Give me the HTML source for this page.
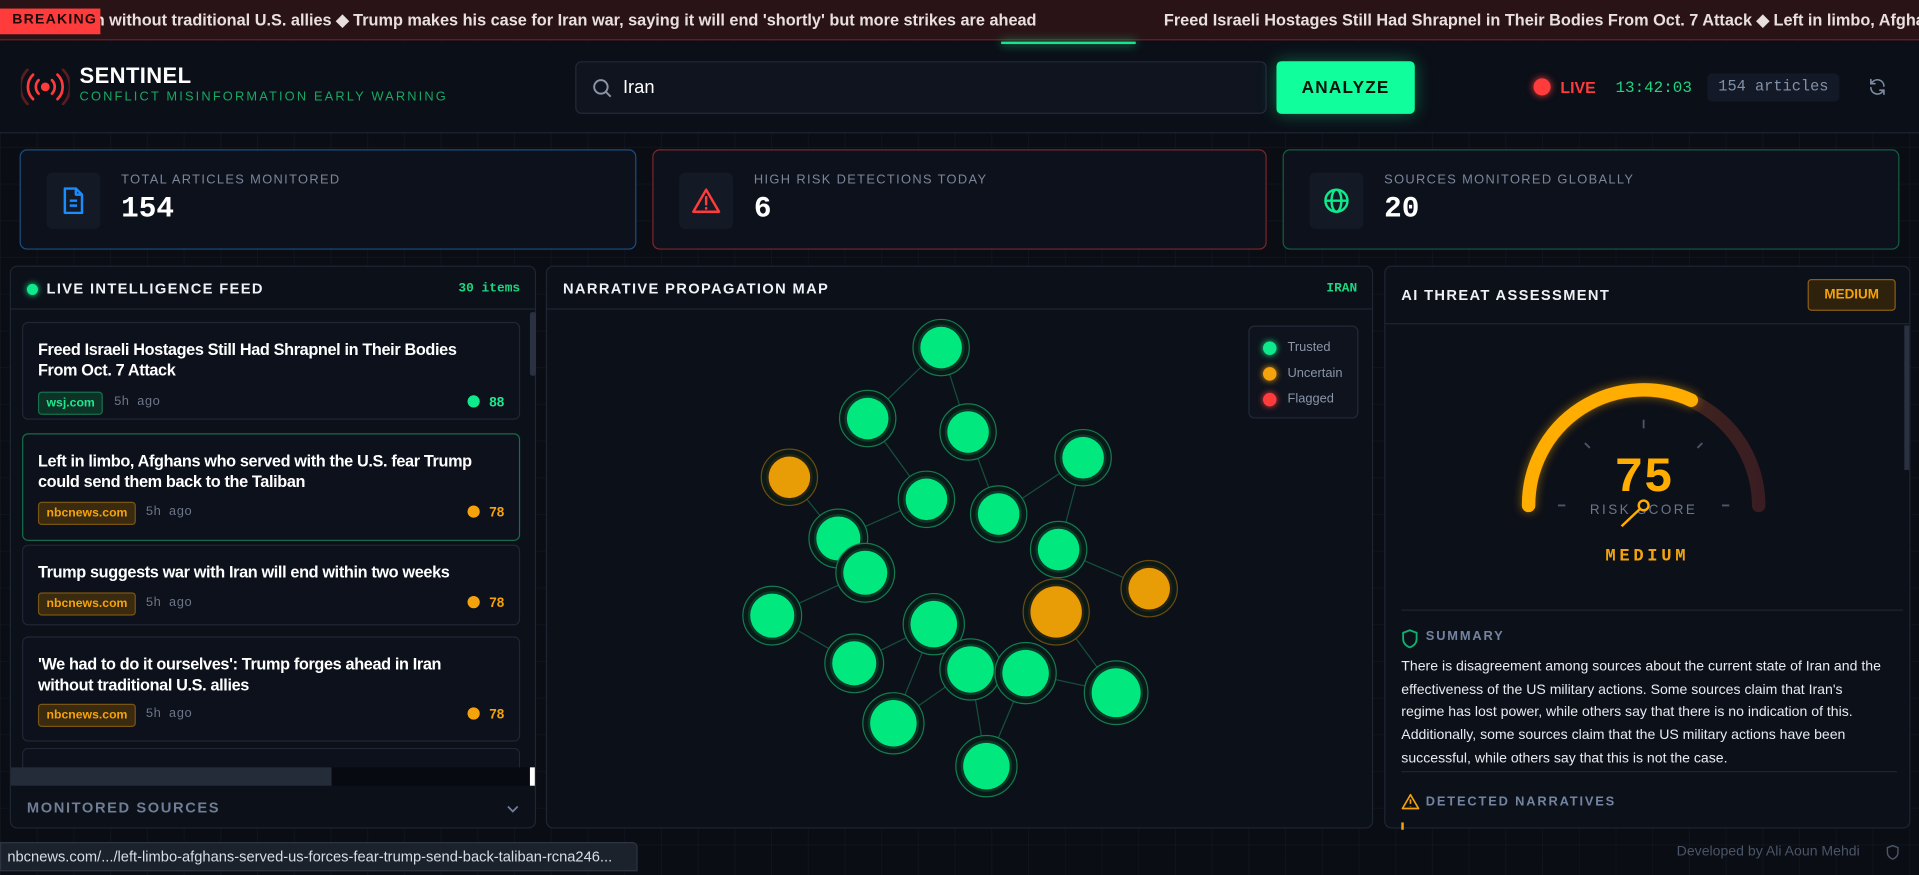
<!DOCTYPE html>
<html><head><meta charset="utf-8">
<style>
*{box-sizing:border-box;margin:0;padding:0}
html,body{width:1919px;height:875px;overflow:hidden;background:#0a0d14}
#w{width:1568px;height:715px;transform:scale(1.22385);transform-origin:0 0;position:relative;font-family:"Liberation Sans",sans-serif;color:#e6e9ef;
background-color:#0a0d14;background-image:linear-gradient(rgba(40,50,70,.18) 1px,transparent 1px),linear-gradient(90deg,rgba(40,50,70,.18) 1px,transparent 1px);background-size:30px 30px}
.mono{font-family:"Liberation Mono",monospace}
.abs{position:absolute}
#tick{left:0;top:0;width:1568px;height:33px;background:#2a1317;border-bottom:1px solid #6b2226;overflow:hidden;white-space:nowrap}
#tick .t{position:absolute;top:9px;font-size:13.3px;font-weight:bold;color:#e8dfe0}
#brk{left:0;top:7px;width:82px;height:21px;background:#ff3b3b;color:#1a0a0a;font-size:11.5px;font-weight:bold;letter-spacing:1px;padding:3px 0 0 10px}
#hdr{left:0;top:34px;width:1568px;height:75px;background:#0b0f18;border-bottom:1px solid #1e2533}
.card{position:absolute;border-radius:6px;background:#0d111b}
.stat{top:122px;height:82px;width:504px}
.stat .ic{position:absolute;left:21px;top:18px;width:44px;height:46px;background:#141a25;border-radius:5px}
.stat .lb{position:absolute;left:82px;top:18px;font-size:10.5px;letter-spacing:1.1px;color:#7a869a}
.stat .v{position:absolute;left:82px;top:35px;font-size:24px;font-weight:bold;color:#fff}
.panel{position:absolute;top:217px;height:460px;border:1px solid #1e2533;border-radius:6px;background:#0c1019}
.ph{font-size:12px;font-weight:bold;letter-spacing:1.1px;color:#eef1f5}
.item{position:absolute;left:9px;width:407px;border:1px solid #1f2634;border-radius:5px;background:#0d111b}
.item .h{position:absolute;left:12px;top:14px;right:30px;font-size:13.3px;font-weight:bold;line-height:16.5px;color:#fff;letter-spacing:-.3px}
.tag{position:absolute;left:12px;height:19px;font-size:10px;font-weight:bold;padding:3px 6px;border-radius:3px}
.tg{background:#0c3326;border:1px solid #16704f;color:#1ee88e}
.to{background:#3a2a10;border:1px solid #7a5512;color:#f5a30c}
.ago{position:absolute;left:100px;font-size:10.5px;color:#6b7689}
.sc{position:absolute;right:12px;font-size:11px;font-weight:bold}
.sc i{display:inline-block;width:10px;height:10px;border-radius:50%;margin-right:8px;vertical-align:-1px}
</style></head><body><div id="w">
<div id="tick" class="abs">
<div class="t" style="left:70px">an without traditional U.S. allies ◆ Trump makes his case for Iran war, saying it will end 'shortly' but more strikes are ahead</div>
<div class="t" style="left:951px">Freed Israeli Hostages Still Had Shrapnel in Their Bodies From Oct. 7 Attack ◆ Left in limbo, Afghans who served</div>
<div id="brk" class="abs">BREAKING</div>
</div>
<div id="hdr" class="abs">
<div class="abs" style="left:818px;top:0;width:110px;height:2px;background:#16e68a;box-shadow:0 0 8px #16e68a"></div>
<svg class="abs" style="left:17px;top:22px" width="40" height="30" viewBox="0 0 40 30"><g fill="none" stroke="#ff3b3b" stroke-width="2.2" stroke-linecap="round"><circle cx="20" cy="15" r="2.5" fill="#ff3b3b"/><path d="M14.5 9.5a8 8 0 0 0 0 11M25.5 9.5a8 8 0 0 1 0 11M10 5a14 14 0 0 0 0 20M30 5a14 14 0 0 1 0 20"/><path d="M5.5 1a20 20 0 0 0 0 28M34.5 1a20 20 0 0 1 0 28" stroke="#5a1c20"/></g></svg>
<div class="abs" style="left:65px;top:18px;font-size:18px;font-weight:bold;color:#fff;letter-spacing:.3px">SENTINEL</div>
<div class="abs" style="left:65px;top:39px;font-size:10.5px;color:#17a862;letter-spacing:1.75px">CONFLICT MISINFORMATION EARLY WARNING</div>
<div class="abs" style="left:470px;top:16px;width:565px;height:43px;border:1px solid #222a38;border-radius:5px;background:#0f141e">
<svg class="abs" style="left:13px;top:13px" width="16" height="16" viewBox="0 0 16 16" fill="none" stroke="#8b95a6" stroke-width="1.6"><circle cx="7" cy="7" r="5.5"/><path d="M11 11l4 4"/></svg>
<div class="abs" style="left:38px;top:12px;font-size:15px;color:#fff">Iran</div></div>
<div class="abs" style="left:1043px;top:16px;width:113px;height:43px;background:#10ff9c;border-radius:4px;box-shadow:0 0 14px rgba(16,255,156,.35);color:#06140d;font-weight:bold;font-size:14px;letter-spacing:1px;text-align:center;line-height:43px">ANALYZE</div>
<div class="abs" style="left:1253px;top:30px;width:14px;height:14px;border-radius:50%;background:#ff3b3b;box-shadow:0 0 6px #ff3b3b"></div>
<div class="abs" style="left:1275px;top:30px;font-size:13px;font-weight:bold;color:#ff3b3b">LIVE</div>
<div class="abs mono" style="left:1320px;top:30px;font-size:13px;color:#1ed67f">13:42:03</div>
<div class="abs mono" style="left:1395px;top:26px;width:108px;height:23px;background:#131926;border-radius:4px;font-size:12.5px;color:#8291a8;text-align:center;line-height:23px">154 articles</div>
<svg class="abs" style="left:1526px;top:29px" width="16" height="16" viewBox="0 0 24 24" fill="none" stroke="#7e8aa0" stroke-width="2" stroke-linecap="round"><path d="M20 11a8 8 0 0 0-14-5l-2 2M4 3v5h5M4 13a8 8 0 0 0 14 5l2-2M20 21v-5h-5"/></svg>
</div>

<div class="card stat" style="left:16px;border:1px solid #1d4d80">
<div class="ic"><svg class="abs" style="left:12px;top:12px" width="20" height="22" viewBox="0 0 20 22" fill="none" stroke="#1a8cff" stroke-width="2" stroke-linejoin="round"><path d="M3 1h9l5 5v15H3z"/><path d="M12 1v5h5M7 11h6M7 15h6"/></svg></div>
<div class="lb">TOTAL ARTICLES MONITORED</div><div class="v mono">154</div></div>
<div class="card stat" style="left:533px;width:502px;border:1px solid #7a262b">
<div class="ic"><svg class="abs" style="left:10px;top:12px" width="24" height="22" viewBox="0 0 24 22" fill="none" stroke="#ff3b3b" stroke-width="2" stroke-linejoin="round" stroke-linecap="round"><path d="M12 2L1.5 20h21z"/><path d="M12 8v6M12 17v.5"/></svg></div>
<div class="lb">HIGH RISK DETECTIONS TODAY</div><div class="v mono">6</div></div>
<div class="card stat" style="left:1048px;border:1px solid #145c40">
<div class="ic"><svg class="abs" style="left:11px;top:12px" width="22" height="22" viewBox="0 0 22 22" fill="none" stroke="#10e88c" stroke-width="2"><circle cx="11" cy="11" r="9"/><ellipse cx="11" cy="11" rx="4" ry="9"/><path d="M2 11h18"/></svg></div>
<div class="lb">SOURCES MONITORED GLOBALLY</div><div class="v mono">20</div></div>

<!-- left panel -->
<div class="panel" style="left:8px;width:430px">
<div class="abs" style="left:13px;top:14px;width:9px;height:9px;border-radius:50%;background:#10e88c;box-shadow:0 0 5px #10e88c"></div>
<div class="abs ph" style="left:29px;top:11px">LIVE INTELLIGENCE FEED</div>
<div class="abs mono" style="right:12px;top:12px;font-size:10.5px;font-weight:bold;color:#1ed67f">30 items</div>
<div class="abs" style="left:0;top:34px;width:428px;height:1px;background:#1e2533"></div>
<div class="abs" style="left:424px;top:37px;width:5px;height:52px;background:#2a3140;border-radius:2px"></div>
<div class="item" style="top:45px;height:80px"><div class="h">Freed Israeli Hostages Still Had Shrapnel in Their Bodies From Oct. 7 Attack</div>
<div class="tag tg" style="top:56px">wsj.com</div><div class="ago mono" style="top:59px;left:74px">5h ago</div><div class="sc" style="top:59px;color:#1ee88e"><i style="background:#10e88c"></i>88</div></div>
<div class="item" style="top:136px;height:88px;border-color:#176a4b"><div class="h">Left in limbo, Afghans who served with the U.S. fear Trump could send them back to the Taliban</div>
<div class="tag to" style="top:55px">nbcnews.com</div><div class="ago mono" style="top:58px">5h ago</div><div class="sc" style="top:58px;color:#f5a30c"><i style="background:#f5a30c"></i>78</div></div>
<div class="item" style="top:227px;height:66px"><div class="h">Trump suggests war with Iran will end within two weeks</div>
<div class="tag to" style="top:38px">nbcnews.com</div><div class="ago mono" style="top:41px">5h ago</div><div class="sc" style="top:41px;color:#f5a30c"><i style="background:#f5a30c"></i>78</div></div>
<div class="item" style="top:302px;height:86px"><div class="h">'We had to do it ourselves': Trump forges ahead in Iran without traditional U.S. allies</div>
<div class="tag to" style="top:54px">nbcnews.com</div><div class="ago mono" style="top:57px">5h ago</div><div class="sc" style="top:57px;color:#f5a30c"><i style="background:#f5a30c"></i>78</div></div>
<div class="item" style="top:393px;height:20px;border-bottom:none"></div>
<div class="abs" style="left:0;top:409px;width:262px;height:15px;background:#242c3a"></div>
<div class="abs" style="left:262px;top:409px;width:162px;height:15px;background:#070a10"></div>
<div class="abs" style="left:424px;top:409px;width:4px;height:15px;background:#fff"></div>
<div class="abs" style="left:13px;top:435px;font-size:12px;font-weight:bold;letter-spacing:1.3px;color:#6f7d95">MONITORED SOURCES</div>
<svg class="abs" style="left:404px;top:438px" width="12" height="10" viewBox="0 0 12 10" fill="none" stroke="#6f7d95" stroke-width="1.5"><path d="M2 3l4 4 4-4"/></svg>
</div>

<!-- middle -->
<div class="panel" style="left:446px;width:676px">
<div class="abs ph" style="left:13px;top:11px">NARRATIVE PROPAGATION MAP</div>
<div class="abs mono" style="right:12px;top:12px;font-size:10.5px;font-weight:bold;color:#1ed67f">IRAN</div>
<div class="abs" style="left:0;top:34px;width:674px;height:1px;background:#1e2533"></div>
<div class="abs" style="left:573px;top:48px;width:90px;height:76px;border:1px solid #222a38;border-radius:5px;background:#0e131d;font-size:10.5px;color:#8a95a8">
<div class="abs" style="left:11px;top:12px;width:11px;height:11px;border-radius:50%;background:#10e88c;box-shadow:0 0 5px #10e88c"></div><div class="abs" style="left:31px;top:11px">Trusted</div>
<div class="abs" style="left:11px;top:33px;width:11px;height:11px;border-radius:50%;background:#f5a30c;box-shadow:0 0 5px #f5a30c"></div><div class="abs" style="left:31px;top:32px">Uncertain</div>
<div class="abs" style="left:11px;top:54px;width:11px;height:11px;border-radius:50%;background:#ff3b3b;box-shadow:0 0 5px #ff3b3b"></div><div class="abs" style="left:31px;top:53px">Flagged</div>
</div>
</div>
<svg class="abs" style="left:0;top:0" width="1568" height="715" viewBox="0 0 1568 715">
<g stroke="#1a6a4a" stroke-width="1" opacity=".7">
<path d="M769 284L709 342M769 284L791 353M709 342L757 408M791 353L816 420M885 374L816 420M885 374L865 449M865 449L939 481M757 408L685 440M645 390L685 440M685 440L707 468M631 503L707 468M631 503L698 542M698 542L763 510M763 510L730 591M730 591L793 547M793 547L806 626M838 550L806 626M912 566L838 550M863 500L912 566M763 510L793 547"/></g>
<g id="nodes"></g>
</svg>

<!-- right -->
<div class="panel" style="left:1131px;width:430px">
<div class="abs ph" style="left:13px;top:16px">AI THREAT ASSESSMENT</div>
<div class="abs" style="left:345px;top:10px;width:72px;height:26px;border:1px solid #8a5d12;background:#2e220d;border-radius:3px;color:#f5a30c;font-size:11px;font-weight:bold;text-align:center;line-height:24px">MEDIUM</div>
<div class="abs" style="left:0;top:46px;width:428px;height:1px;background:#1e2533"></div>
<div class="abs" style="left:424px;top:48px;width:4px;height:118px;background:#2a3140"></div>
<svg class="abs" style="left:90px;top:80px" width="240" height="170" viewBox="0 0 240 170">
<defs><linearGradient id="g1" x1="0" x2="1"><stop offset="0" stop-color="#4a3318"/><stop offset="1" stop-color="#3a1d22"/></linearGradient></defs>
<path d="M27 115A94 94 0 0 1 215 115" fill="none" stroke="url(#g1)" stroke-width="11" stroke-linecap="round"/>
<path d="M27 115A94 94 0 0 1 160 29" fill="none" stroke="#ffad00" stroke-width="11" stroke-linecap="round" style="filter:drop-shadow(0 0 4px rgba(255,173,0,.5))"/>
<g stroke="#4c566a" stroke-width="1.5"><path d="M51 115h6M185 115h6M121 45v7M73 64l4 4M169 64l-4 4"/></g>
<text x="121" y="103" text-anchor="middle" font-family="Liberation Mono,monospace" font-weight="bold" font-size="40" fill="#ffad00">75</text>
<text x="121" y="122" text-anchor="middle" font-family="Liberation Sans,sans-serif" font-size="11" letter-spacing="2" fill="#6b7689">RISK SCORE</text>
<path d="M121 115L103 132" stroke="#ffad00" stroke-width="2"/><circle cx="121" cy="115" r="4" fill="#0c1019" stroke="#ffad00" stroke-width="2"/>
</svg>
<div class="abs mono" style="left:0;width:428px;top:229px;text-align:center;font-size:14px;font-weight:bold;letter-spacing:3px;color:#f5a30c">MEDIUM</div>
<div class="abs" style="left:13px;top:280px;width:410px;height:1px;background:#1e2533"></div>
<svg class="abs" style="left:13px;top:296px" width="14" height="16" viewBox="0 0 14 16" fill="none" stroke="#10b070" stroke-width="1.5"><path d="M7 1l5.5 2v5c0 3.5-2.5 5.8-5.5 7C4 13.8 1.5 11.5 1.5 8V3z"/></svg>
<div class="abs" style="left:33px;top:296px;font-size:10.5px;font-weight:bold;letter-spacing:1.5px;color:#7384a0">SUMMARY</div>
<div class="abs" style="left:13px;top:318px;width:396px;font-size:11.5px;line-height:18.7px;color:#e8ebf0">There is disagreement among sources about the current state of Iran and the effectiveness of the US military actions. Some sources claim that Iran's regime has lost power, while others say that there is no indication of this. Additionally, some sources claim that the US military actions have been successful, while others say that this is not the case.</div>
<div class="abs" style="left:13px;top:412px;width:405px;height:1px;background:#1e2533"></div>
<svg class="abs" style="left:13px;top:430px" width="15" height="14" viewBox="0 0 24 22" fill="none" stroke="#f5a30c" stroke-width="2.2" stroke-linejoin="round"><path d="M12 2L1.5 20h21z"/><path d="M12 8v6M12 17v.5"/></svg>
<div class="abs" style="left:33px;top:431px;font-size:10.5px;font-weight:bold;letter-spacing:1.5px;color:#7384a0">DETECTED NARRATIVES</div>
<div class="abs" style="left:13px;top:454px;width:2px;height:6px;background:#f5a30c"></div>
</div>

<div class="abs" style="left:0;top:688px;width:521px;height:24px;background:#1c222c;border:1px solid #2c3442;border-radius:0 4px 0 0;font-size:12px;color:#d8dde5;padding:4px 0 0 5px;white-space:nowrap">nbcnews.com/.../left-limbo-afghans-served-us-forces-fear-trump-send-back-taliban-rcna246...</div>
<div class="abs" style="left:1370px;top:690px;font-size:11.5px;color:#4a5568">Developed by Ali Aoun Mehdi</div>
<svg class="abs" style="left:1541px;top:690px" width="11" height="13" viewBox="0 0 14 16" fill="none" stroke="#4a5568" stroke-width="1.5"><path d="M7 1l5.5 2v5c0 3.5-2.5 5.8-5.5 7C4 13.8 1.5 11.5 1.5 8V3z"/></svg>
</div>
<script>
var N=[[769,284,17,0],[709,342,17,0],[791,353,17,0],[885,374,17,0],[645,390,17,1],[757,408,17,0],[816,420,17,0],[685,440,18,0],[865,449,17,0],[707,468,18,0],[939,481,17,1],[863,500,21,1],[631,503,18,0],[763,510,19,0],[698,542,18,0],[793,547,19,0],[838,550,19,0],[912,566,20,0],[730,591,19,0],[806,626,19,0]];
var s='';N.forEach(function(n){var c=n[3]?'#e89c06':'#00e87e',r=n[3]?'#6a4a10':'#137a52';
s+='<circle cx="'+n[0]+'" cy="'+n[1]+'" r="'+(n[2]+6)+'" fill="#0a1a16" stroke="'+r+'" stroke-width="1"/>';
s+='<circle cx="'+n[0]+'" cy="'+n[1]+'" r="'+(n[2]+2)+'" fill="'+(n[3]?'#2a2210':'#0c3a2a')+'"/>';
s+='<circle cx="'+n[0]+'" cy="'+n[1]+'" r="'+n[2]+'" fill="'+c+'"/>';});
document.getElementById('nodes').innerHTML=s;
</script>
</body></html>
